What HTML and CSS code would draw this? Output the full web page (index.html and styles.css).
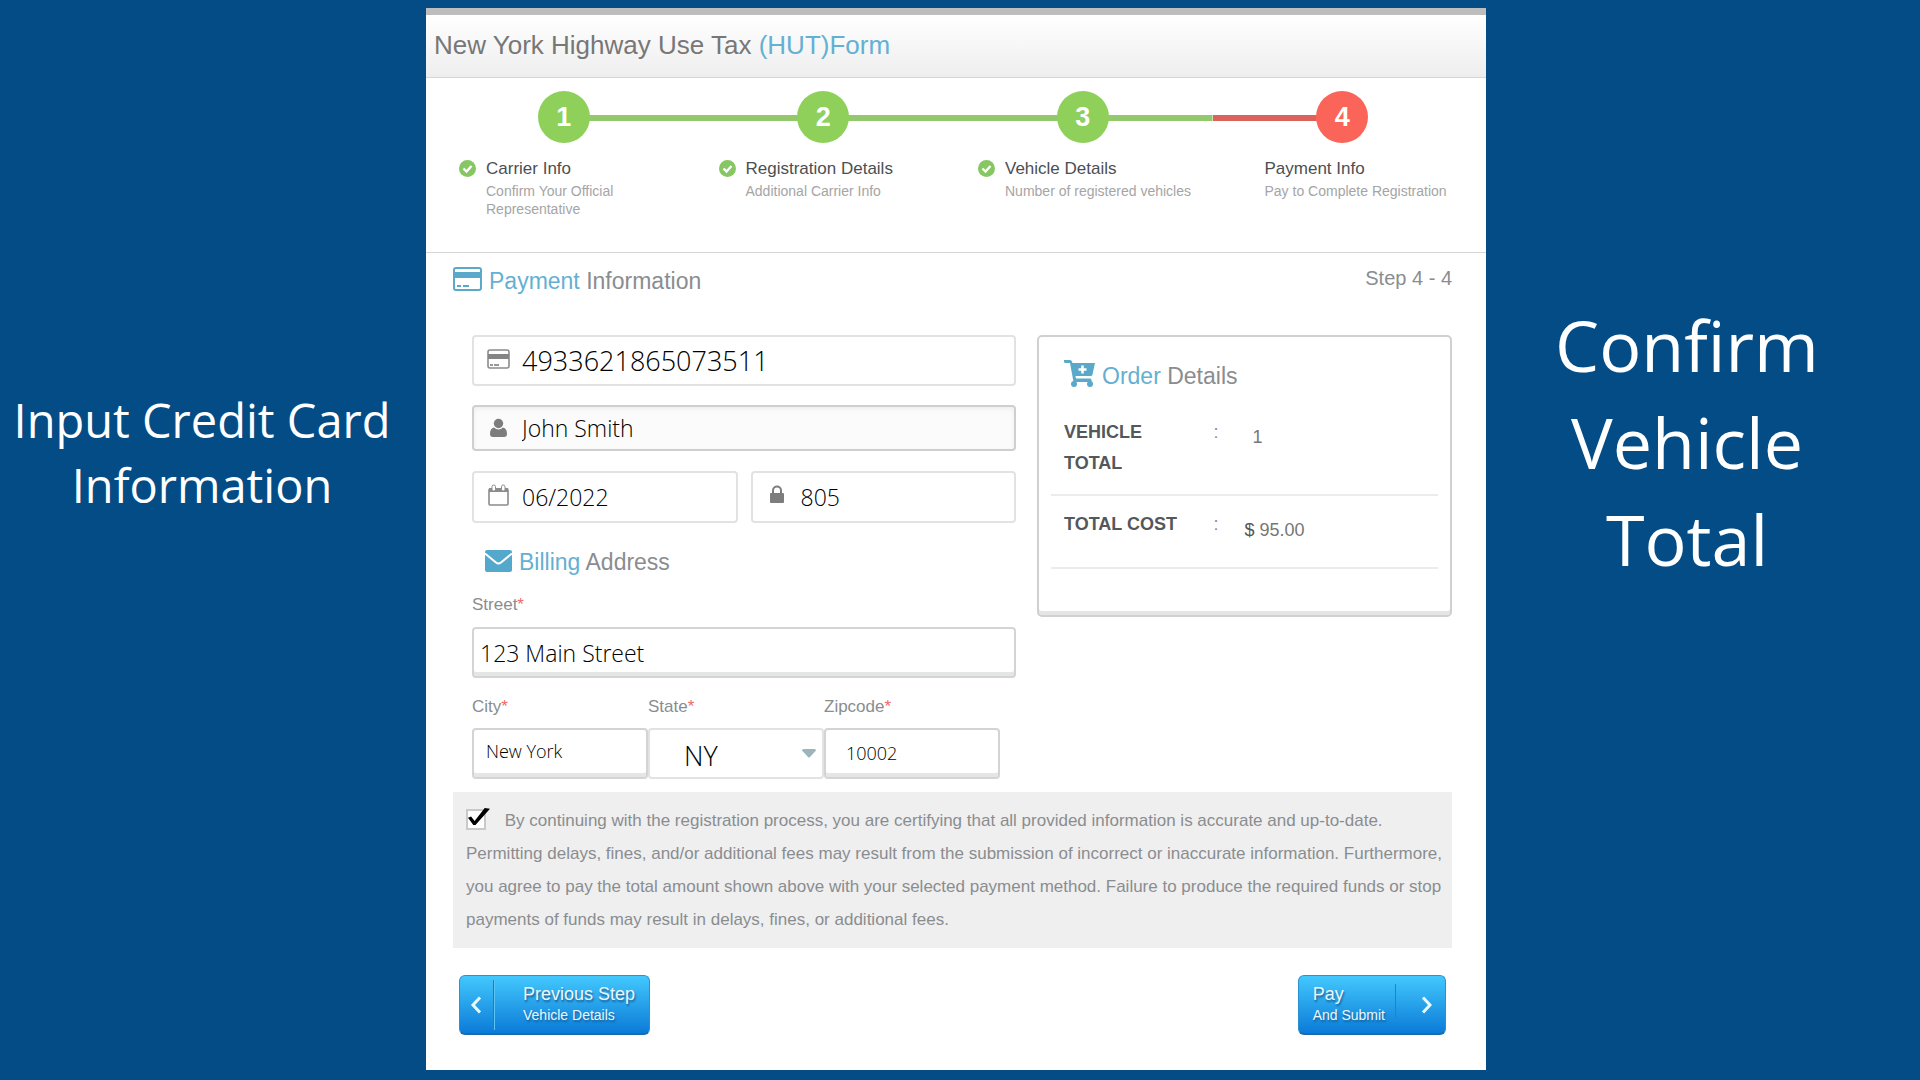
FILE: index.html
```html
<!DOCTYPE html>
<html lang="en">
<head>
  <meta charset="UTF-8" />
  <meta name="viewport" content="width=device-width, initial-scale=1.0" />
  <title>New York Highway Use Tax (HUT) Form</title>
  <link rel="stylesheet" href="styles.css">
</head>
<body>
  <div class="page">
    <aside class="callout callout-left">Input Credit Card Information</aside>

    <main class="panel">
      <h1 class="panel-title">New York Highway Use Tax <span class="accent">(HUT)Form</span></h1>

      <ol class="steps">
        <li class="step">
          <div class="step-track"><span class="step-number">1</span></div>
          <div class="step-label">
            <svg class="step-check" viewBox="0 0 17 17"><circle cx="8.5" cy="8.5" r="8.5" fill="#86c663"/><path d="M4.5 8.5l3 3 5-5.5" fill="none" stroke="#fff" stroke-width="2.4"/></svg>
            <div class="step-text">
              <div class="step-name">Carrier Info</div>
              <div class="step-note">Confirm Your Official Representative</div>
            </div>
          </div>
        </li>
        <li class="step">
          <div class="step-track"><span class="step-number">2</span></div>
          <div class="step-label">
            <svg class="step-check" viewBox="0 0 17 17"><circle cx="8.5" cy="8.5" r="8.5" fill="#86c663"/><path d="M4.5 8.5l3 3 5-5.5" fill="none" stroke="#fff" stroke-width="2.4"/></svg>
            <div class="step-text">
              <div class="step-name">Registration Details</div>
              <div class="step-note">Additional Carrier Info</div>
            </div>
          </div>
        </li>
        <li class="step">
          <div class="step-track"><span class="step-number">3</span></div>
          <div class="step-label">
            <svg class="step-check" viewBox="0 0 17 17"><circle cx="8.5" cy="8.5" r="8.5" fill="#86c663"/><path d="M4.5 8.5l3 3 5-5.5" fill="none" stroke="#fff" stroke-width="2.4"/></svg>
            <div class="step-text">
              <div class="step-name">Vehicle Details</div>
              <div class="step-note">Number of registered vehicles</div>
            </div>
          </div>
        </li>
        <li class="step active">
          <div class="step-track"><span class="step-number">4</span></div>
          <div class="step-label">
            <div class="step-text">
              <div class="step-name">Payment Info</div>
              <div class="step-note">Pay to Complete Registration</div>
            </div>
          </div>
        </li>
      </ol>

      <form class="content">
        <div class="content-head">
          <h2 class="heading">
            <svg width="29" height="24" viewBox="0 0 29 24"><rect x="1" y="1" width="27" height="22" rx="2" fill="#fff" stroke="#5aa9cb" stroke-width="2"/><path d="M1 5h27v6H1z" fill="#5aa9cb"/><path d="M4 19h4M10 19h6" stroke="#5aa9cb" stroke-width="2"/></svg>
            <span><span class="accent">Payment</span> Information</span>
          </h2>
          <div class="step-count">Step 4 - 4</div>
        </div>

        <div class="columns">
          <div class="fields">
            <label class="field">
              <svg class="field-icon" width="23" height="20" viewBox="0 0 23 20"><rect x="1" y="1" width="21" height="18" rx="2" fill="#fff" stroke="#8c8c8c" stroke-width="1.6"/><path d="M1 5h21v5H1z" fill="#858585"/><path d="M3 16h3M7 16h5" stroke="#999" stroke-width="2"/></svg>
              <input class="text-lg" type="text" aria-label="Card number" value="4933621865073511">
            </label>
            <label class="field field-focus">
              <svg class="field-icon" width="23" height="20" viewBox="0 0 23 20"><circle cx="11.5" cy="5.5" r="4.7" fill="#7d7d7d"/><path d="M7 9.5c2.5 2.6 6.500 2.6 9 0 2.6.6 4 2.9 4 6.500 0 2-1 3-3 3H6c-2 0-3-1-3-3 0-3.6 1.4-5.9 4-6.500z" fill="#7d7d7d"/></svg>
              <input type="text" aria-label="Name on card" value="John Smith">
            </label>
            <div class="field-pair">
              <label class="field">
                <svg class="field-icon" width="23" height="22" viewBox="0 0 23 22"><rect x="2" y="5" width="19" height="16" rx="1" fill="#fff" stroke="#8c8c8c" stroke-width="1.6"/><path d="M2 4h19v4H2z" fill="#8c8c8c"/><rect x="5" y="1" width="3.5" height="6" rx="1.7" fill="#fff" stroke="#8c8c8c"/><rect x="14.5" y="1" width="3.5" height="6" rx="1.7" fill="#fff" stroke="#8c8c8c"/></svg>
                <input type="text" aria-label="Expiry date" value="06/2022">
              </label>
              <label class="field">
                <svg class="field-icon" width="23" height="22" viewBox="0 0 23 22"><rect x="4" y="9" width="14" height="10" rx="1" fill="#7d7d7d"/><path d="M7 10V6.500a4 4 0 0 1 8 0V10" fill="none" stroke="#7d7d7d" stroke-width="2"/></svg>
                <input type="text" aria-label="Security code" value="805">
              </label>
            </div>

            <h2 class="heading heading-billing">
              <svg width="27" height="22" viewBox="0 0 27 22"><rect width="27" height="22" rx="2" fill="#54a8cc"/><path d="M0 3.500l11 9c1.5 1.2 3.500 1.2 5 0l11-9" fill="none" stroke="#fff" stroke-width="2"/></svg>
              <span><span class="accent">Billing</span> Address</span>
            </h2>

            <label class="caption" for="street">Street<span class="required">*</span></label>
            <input class="box" type="text" id="street" value="123 Main Street">

            <div class="locality">
              <div>
                <label class="caption" for="city">City<span class="required">*</span></label>
                <input class="box box-city" type="text" id="city" value="New York">
              </div>
              <div>
                <label class="caption" for="state">State<span class="required">*</span></label>
                <div class="select-wrap">
                  <select class="box box-state" id="state">
                    <option>NY</option>
                  </select>
                  <svg class="select-arrow" width="14" height="9" viewBox="0 0 14 9"><path d="M0 1.500Q0 0 1.500 0h11Q14 0 14 1.500L8 8q-1 1-2 0z" fill="#9db4bd"/></svg>
                </div>
              </div>
              <div>
                <label class="caption" for="zip">Zipcode<span class="required">*</span></label>
                <input class="box box-zip" type="text" id="zip" value="10002">
              </div>
            </div>
          </div>

          <section class="order">
            <h2 class="heading">
              <svg width="31" height="27" viewBox="0 0 31 27"><path d="M0 0h6q1.500 0 2 1.500L8.400 3H31l-2.500 11.500q-.3 1.500-1.800 1.500H11.500l.5 2.500h14q1.500 0 1.500 1.500v2H9.500L6 3H1.500Q0 3 0 1.500z" fill="#5aa9cb"/><circle cx="10" cy="24" r="3" fill="#5aa9cb"/><circle cx="26" cy="24" r="3" fill="#5aa9cb"/><path d="M18.500 5.500v8M14.500 9.500h8" stroke="#fff" stroke-width="2.6"/></svg>
              <span><span class="accent">Order</span> Details</span>
            </h2>
            <table class="order-table">
              <tr>
                <th>VEHICLE TOTAL</th>
                <td class="colon">:</td>
                <td class="count">1</td>
              </tr>
              <tr class="cost">
                <th>TOTAL COST</th>
                <td class="colon">:</td>
                <td class="amount"><span class="currency">$</span> 95.00</td>
              </tr>
            </table>
          </section>
        </div>

        <div class="consent">
          <input type="checkbox" id="agree" checked>
          <label for="agree">By continuing with the registration process, you are certifying that all provided information is accurate and up-to-date. Permitting delays, fines, and/or additional fees may result from the submission of incorrect or inaccurate information. Furthermore, you agree to pay the total amount shown above with your selected payment method. Failure to produce the required funds or stop payments of funds may result in delays, fines, or additional fees.</label>
        </div>

        <div class="actions">
          <button class="btn btn-prev" type="button">
            <span class="btn-arrow"><svg width="12" height="18" viewBox="0 0 12 18"><path d="M10 1.500L3 9l7 7.500" fill="none" stroke="#e8f8ff" stroke-width="3"/></svg></span>
            <span class="btn-text"><span class="btn-main">Previous Step</span><span class="btn-sub">Vehicle Details</span></span>
          </button>
          <button class="btn btn-next" type="submit">
            <span class="btn-text"><span class="btn-main">Pay</span><span class="btn-sub">And Submit</span></span>
            <span class="btn-arrow"><svg width="12" height="18" viewBox="0 0 12 18"><path d="M2 1.500L9 9l-7 7.500" fill="none" stroke="#e8f8ff" stroke-width="3"/></svg></span>
          </button>
        </div>
      </form>
    </main>

    <aside class="callout callout-right">Confirm Vehicle Total</aside>
  </div>
</body>
</html>
```
FILE: styles.css
```css
* { box-sizing: border-box; }
body { margin: 0; background: #034c86; font-family: "Liberation Sans", Arial, sans-serif; color: #8a8d90; }
h1, h2 { margin: 0; font-weight: normal; }
.page { display: grid; grid-template-columns: 426fr 1060fr 434fr; min-height: 100vh; align-items: start; padding: 8px 0; }

.callout { color: #fff; font-family: "Open Sans", sans-serif; text-align: center; font-variant-ligatures: none; }
.callout-left { padding: 380px 22px 0 0; font-size: 47px; line-height: 65px; }
.callout-right { padding: 289px 96px 0 64px; font-size: 70px; line-height: 97px; }

.panel { background: #fff; border-top: 7px solid #bdbdbd; }
.panel-title { padding: 0 8px 2px; font-size: 26px; line-height: 60px; color: #777; background: linear-gradient(#fff, #eee); border-bottom: 1px solid #d5d5d5; }
.accent { color: #64b0d2; }

/* progress steps */
.steps { display: grid; grid-template-columns: repeat(4, 1fr); list-style: none; margin: 0; padding: 13px 14px 34px 8px; border-bottom: 1px solid #d5d5d5; }
.step-track { display: flex; justify-content: center; background: linear-gradient(#93c86d, #93c86d) no-repeat right 24px / 100% 6px; }
.step:first-child .step-track { background-size: 50% 6px; }
.step.active .step-track { background: linear-gradient(#db635b, #db635b) no-repeat left 24px / 50% 6px; }
.step-number { width: 52px; height: 52px; border-radius: 50%; background: #8fd05b; color: #fff; font-size: 27px; font-weight: bold; line-height: 52px; text-align: center; }
.step.active .step-number { background: #fb6559; }
.step-label { display: flex; gap: 10px; min-height: 75px; padding: 15px 0 0 25px; }
.step.active .step-label { padding-left: 52px; }
.step-check { flex: none; width: 17px; height: 17px; margin-top: 2px; }
.step-text { padding-right: 16px; }
.step-name { font-size: 17px; line-height: 22px; color: #4b4f53; }
.step-note { font-size: 14px; line-height: 18px; color: #a5a5a5; margin-top: 2px; }

/* form */
.content { padding: 14px 34px 35px 27px; }
.content-head { display: flex; justify-content: space-between; }
.heading { display: flex; gap: 7px; font-size: 23px; line-height: 28px; }
.step-count { font-size: 20px; line-height: 22px; }
.columns { display: grid; grid-template-columns: minmax(0, 563fr) minmax(0, 415fr); gap: 21px; align-items: start; padding-top: 40px; }
.fields { padding-left: 19px; }
.field { display: flex; align-items: center; gap: 12px; height: 51px; padding: 0 13px; margin-bottom: 19px; border: 2px solid #e2e2e2; border-radius: 4px; }
.field-icon { flex: none; margin-bottom: 4px; }
.field input { flex: 1; min-width: 0; padding: 0; border: 0; outline: 0; background: none; }
.field input, .box { font-family: "Open Sans", sans-serif; font-weight: 300; font-size: 23px; color: #000; }
.field .text-lg { font-size: 27px; }
.field-focus { height: 46px; background: #fbfbfb; border-color: #cfcfcf; box-shadow: inset 0 2px 4px #eee; margin-bottom: 20px; }
.field-focus .field-icon { margin-bottom: 0; }
.field-pair { display: grid; grid-template-columns: minmax(0, 1fr) minmax(0, 1fr); gap: 13px; }
.field-pair .field { height: 52px; margin-bottom: 25px; }
.heading-billing { padding-left: 13px; }
.heading-billing svg { margin-top: 2px; }
.caption { display: block; font-size: 17px; line-height: 24px; margin: 17px 0 10px; }
.required { color: #ee6a6a; }
.box { display: block; width: 100%; height: 51px; padding: 0 6px; background: #fff; border: 2px solid #d4d4d4; border-radius: 4px; box-shadow: inset 0 -4px 0 #e4e6e6; }
.locality { display: grid; grid-template-columns: repeat(3, minmax(0, 1fr)); padding-right: 16px; }
.locality .caption { margin-bottom: 9px; }
.locality .box-city { font-size: 18px; padding: 0 12px 6px; }
.locality .box-zip { font-size: 18px; padding: 0 20px 2px; }
.locality .box-state { font-size: 27px; padding: 4px 34px 0; border-color: #e2e2e2; box-shadow: none; appearance: none; }
.select-wrap { position: relative; }
.select-arrow { position: absolute; right: 8px; top: 21px; pointer-events: none; }

/* order summary */
.order { min-height: 282px; padding: 23px 12px 0; border: 2px solid #d0d0d0; border-radius: 5px; box-shadow: inset 0 -4px 0 #e4e6e6; }
.order .heading { padding-left: 13px; line-height: 32px; }
.order-table { width: 100%; margin-top: 16px; border-collapse: collapse; font-size: 18px; line-height: 31px; }
.order-table th, .order-table td { vertical-align: top; text-align: left; padding: 9px 0 15px; border-bottom: 2px solid #ececec; }
.order-table th { width: 42%; padding-left: 13px; padding-right: 30px; color: #54575b; }
.order-table .colon { width: 8%; }
.order-table .count { padding: 14px 0 0 8px; color: #777; }
.order-table .cost th { padding: 13px 0 27px 13px; }
.order-table .cost .colon { padding-top: 13px; }
.order-table .cost .amount { padding: 19px 0 0; color: #777; }
.currency { color: #555; }

.consent { margin-top: 13px; padding: 12px 6px 12px 13px; background: #efefef; font-size: 17px; line-height: 33px; }
.consent input { appearance: none; position: relative; width: 20px; height: 21px; margin: 0 14px 0 0; vertical-align: -4px; background: #fff; border: 2px solid #c9c9c9; }
.consent input:checked::after { content: ""; position: absolute; left: 0; top: -3px; width: 22px; height: 17px; background: #000; clip-path: polygon(0 58%, 14% 50%, 30% 76%, 76% 0, 100% 4%, 34% 100%, 24% 100%); }

.actions { display: flex; justify-content: space-between; padding: 27px 6px 0; }
.btn { display: flex; align-items: center; height: 60px; padding: 0; font-family: inherit; text-align: left; color: #e8f8ff; text-shadow: 1px 2px 2px #1c5f94; background: linear-gradient(#43c8fd, #0b7bd8); border: 1px solid #2a93cf; border-bottom: 2px solid #1a6cb0; border-radius: 6px; }
.btn-main, .btn-sub { display: block; }
.btn-main { font-size: 18px; line-height: 21px; }
.btn-sub { font-size: 14px; line-height: 20px; }
.btn-text { padding-bottom: 1px; }
.btn-arrow { display: flex; align-items: center; }
.btn-prev .btn-arrow { height: 50px; padding: 0 12px 0 10px; border-right: 1px solid #5cc3f2; box-shadow: -1px 0 0 #1581c4 inset; }
.btn-prev .btn-text { padding-left: 28px; padding-right: 14px; }
.btn-next .btn-text { padding-left: 14px; padding-right: 11px; background: linear-gradient(#2384bb, #2384bb) no-repeat right top / 1px 34px; }
.btn-next .btn-arrow { padding: 0 12px 0 25px; }
```
